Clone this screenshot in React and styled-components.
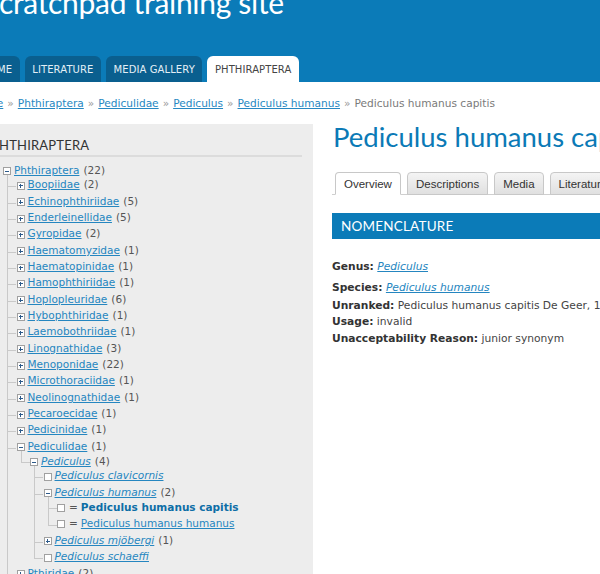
import styled, { createGlobalStyle } from "styled-components";

const GlobalStyle = createGlobalStyle`
  html, body {
    margin: 0;
    padding: 0;
    background: #fff;
    overflow: hidden;
    height: 574px;
  }
  body {
    font-family: "DejaVu Sans", Verdana, sans-serif;
    font-size: 11px;
    color: #333;
  }
`;

const tree = [
  {
    name: "Phthiraptera",
    count: 22,
    open: true,
    children: [
      { name: "Boopiidae", count: 2 },
      { name: "Echinophthiriidae", count: 5 },
      { name: "Enderleinellidae", count: 5 },
      { name: "Gyropidae", count: 2 },
      { name: "Haematomyzidae", count: 1 },
      { name: "Haematopinidae", count: 1 },
      { name: "Hamophthiriidae", count: 1 },
      { name: "Hoplopleuridae", count: 6 },
      { name: "Hybophthiridae", count: 1 },
      { name: "Laemobothriidae", count: 1 },
      { name: "Linognathidae", count: 3 },
      { name: "Menoponidae", count: 22 },
      { name: "Microthoraciidae", count: 1 },
      { name: "Neolinognathidae", count: 1 },
      { name: "Pecaroecidae", count: 1 },
      { name: "Pedicinidae", count: 1 },
      {
        name: "Pediculidae",
        count: 1,
        open: true,
        children: [
          {
            name: "Pediculus",
            italic: true,
            count: 4,
            open: true,
            children: [
              { name: "Pediculus clavicornis", italic: true, leaf: true },
              {
                name: "Pediculus humanus",
                italic: true,
                count: 2,
                open: true,
                children: [
                  { name: "Pediculus humanus capitis", synonym: true, current: true, leaf: true },
                  { name: "Pediculus humanus humanus", synonym: true, leaf: true },
                ],
              },
              { name: "Pediculus mjöbergi", italic: true, count: 1 },
              { name: "Pediculus schaeffi", italic: true, leaf: true },
            ],
          },
        ],
      },
      { name: "Pthiridae", count: 2 },
      { name: "Ricinidae", count: 3 },
    ],
  },
];

const App = () => {
  return (
    <>
      <GlobalStyle />
      <Page>
        <Header>
          <SiteName>Scratchpad training site</SiteName>
          <Nav>
            <NavTab>Home</NavTab>
            <NavTab>Literature</NavTab>
            <NavTab>Media gallery</NavTab>
            <NavTab $active>Phthiraptera</NavTab>
          </Nav>
        </Header>

        <Breadcrumb>
          <Crumb href="#">Home</Crumb>
          <Sep>»</Sep>
          <Crumb href="#">Phthiraptera</Crumb>
          <Sep>»</Sep>
          <Crumb href="#">Pediculidae</Crumb>
          <Sep>»</Sep>
          <Crumb href="#">Pediculus</Crumb>
          <Sep>»</Sep>
          <Crumb href="#">Pediculus humanus</Crumb>
          <Sep>»</Sep>
          <Here>Pediculus humanus capitis</Here>
        </Breadcrumb>

        <Body>
          <Sidebar>
            <BlockTitle>Phthiraptera</BlockTitle>
            <TreeList $root>
              {tree.map((n) => (
                <TreeNode key={n.name} node={n} depth={0} />
              ))}
            </TreeList>
          </Sidebar>

          <Main>
            <Title>Pediculus humanus capitis</Title>
            <Tabs>
              <Tab $active>Overview</Tab>
              <Tab>Descriptions</Tab>
              <Tab>Media</Tab>
              <Tab>Literature</Tab>
              <Tab>Maps</Tab>
            </Tabs>
            <SectionBar>Nomenclature</SectionBar>
            <Fields>
              <Field $gap={4.5}>
                <Label>Genus:</Label> <FieldLink href="#">Pediculus</FieldLink>
              </Field>
              <Field $gap={1.5}>
                <Label>Species:</Label> <FieldLink href="#">Pediculus humanus</FieldLink>
              </Field>
              <Field>
                <Label>Unranked:</Label> Pediculus humanus capitis De Geer, 1778
              </Field>
              <Field>
                <Label>Usage:</Label> invalid
              </Field>
              <Field>
                <Label>Unacceptability Reason:</Label> junior synonym
              </Field>
            </Fields>
          </Main>
        </Body>
      </Page>
    </>
  );
};

const TreeNode = ({ node, depth }) => {
  const kind = node.leaf ? "leaf" : node.open ? "open" : "closed";
  return (
    <Item $child={depth > 0}>
      <Row>
        <Toggle $kind={kind} />
        {node.synonym && <Eq>=</Eq>}
        {node.current ? (
          <Current>{node.name}</Current>
        ) : (
          <TreeLink href="#" $italic={node.italic}>
            {node.name}
          </TreeLink>
        )}
        {node.count !== undefined && <Count>({node.count})</Count>}
      </Row>
      {node.open && node.children && (
        <TreeList>
          {node.children.map((c) => (
            <TreeNode key={c.name} node={c} depth={depth + 1} />
          ))}
        </TreeList>
      )}
    </Item>
  );
};

const Page = styled.div`
  width: 700px;
  margin-left: -40px;
`;

const Header = styled.header`
  height: 82px;
  background: #0b7bb8;
  display: flex;
  flex-direction: column;
  justify-content: space-between;
  overflow: hidden;
`;

const SiteName = styled.h1`
  margin: -13px 0 0;
  padding-left: 23px;
  font-family: Lato, "Open Sans", sans-serif;
  font-weight: 400;
  font-size: 30px;
  line-height: 30px;
  color: #fff;
  letter-spacing: -0.3px;
`;

const Nav = styled.nav`
  display: flex;
  gap: 5px;
  padding-left: 14px;
`;

const NavTab = styled.a`
  height: 26px;
  line-height: 28px;
  padding: 0 7.5px;
  border-radius: 6px 6px 0 0;
  font-size: 10px;
  letter-spacing: 0.1px;
  text-transform: uppercase;
  background: ${(p) => (p.$active ? "#fff" : "#0a5f8f")};
  color: ${(p) => (p.$active ? "#444" : "#e4eff6")};
`;

const Breadcrumb = styled.div`
  padding: 13px 0 0 12px;
  height: 29px;
  box-sizing: border-box;
  line-height: 16px;
  font-size: 10.6px;
  white-space: nowrap;
  color: #777;
  margin-bottom: 13px;
`;

const Crumb = styled.a`
  color: #2788c2;
  text-decoration: underline;
`;

const Sep = styled.span`
  color: #9a9a9a;
  margin: 0 4px;
`;

const Here = styled.span`
  color: #7a7a7a;
`;

const Body = styled.div`
  display: flex;
  gap: 19px;
  align-items: flex-start;
`;

const Sidebar = styled.aside`
  flex: none;
  margin-left: 10px;
  width: 343px;
  height: 460px;
  box-sizing: border-box;
  padding: 13px 11px 0 21px;
  background: #ededed;
  overflow: hidden;
`;

const BlockTitle = styled.h2`
  margin: 0;
  font-family: Lato, "Open Sans", sans-serif;
  font-weight: 400;
  font-size: 13px;
  line-height: 16px;
  text-transform: uppercase;
  color: #333;
  letter-spacing: 0.2px;
  padding-bottom: 2px;
  border-bottom: 2px solid #dcdcdc;
`;

const TreeList = styled.ul`
  list-style: none;
  margin: ${(p) => (p.$root ? "4.5px 0 0" : "-1.5px 0 0.5px")};
  padding: 0 0 0 ${(p) => (p.$root ? "12px" : "13.5px")};
  font-size: 10.5px;
`;

const Item = styled.li`
  position: relative;

  ${(p) =>
    p.$child &&
    `
    &::before {
      content: "";
      position: absolute;
      left: -9.5px;
      top: -4px;
      bottom: 0;
      border-left: 1px solid #c9c9c9;
    }
    &:last-child::before {
      bottom: auto;
      height: 14px;
    }
    &::after {
      content: "";
      position: absolute;
      left: -9.5px;
      top: 10px;
      width: 9px;
      border-top: 1px solid #c9c9c9;
    }
  `}
`;

const Row = styled.div`
  display: flex;
  align-items: center;
  height: 16.33px;
  white-space: nowrap;
`;

const Toggle = styled.span`
  position: relative;
  z-index: 1;
  flex: none;
  width: 8px;
  height: 8px;
  margin: 3px 3px 0 0;
  box-sizing: border-box;
  border: 1px solid #a0a0a0;
  background: #fff;

  &::before {
    content: "";
    display: ${(p) => (p.$kind === "leaf" ? "none" : "block")};
    position: absolute;
    left: 1px;
    top: 2.5px;
    width: 4px;
    height: 1px;
    background: #2d5a8a;
  }
  &::after {
    content: "";
    display: ${(p) => (p.$kind === "closed" ? "block" : "none")};
    position: absolute;
    left: 2.5px;
    top: 1px;
    width: 1px;
    height: 4px;
    background: #2d5a8a;
  }
`;

const Eq = styled.span`
  color: #555;
  margin: 0 3px 0 1px;
`;

const TreeLink = styled.a`
  color: #2586c0;
  text-decoration: underline;
  font-style: ${(p) => (p.$italic ? "italic" : "normal")};
`;

const Current = styled.span`
  color: #0d6ea6;
  font-weight: bold;
  font-size: 10.5px;
`;

const Count = styled.span`
  color: #555;
  margin-left: 4px;
`;

const Main = styled.main`
  width: 400px;
  flex: none;
`;

const Title = styled.h1`
  margin: -1px 0 0;
  padding-left: 1px;
  font-family: Lato, "Open Sans", sans-serif;
  font-weight: 400;
  font-size: 27.5px;
  line-height: 28px;
  color: #0b7ab6;
  white-space: nowrap;
`;

const Tabs = styled.div`
  display: flex;
  gap: 6px;
  margin-top: 21px;
  padding-left: 3px;
  border-bottom: 1px solid #cfcfcf;
`;

const Tab = styled.a`
  height: 23px;
  margin-bottom: -1px;
  box-sizing: border-box;
  padding: 0 8px;
  line-height: 22px;
  font-family: "Liberation Sans", Arial, sans-serif;
  font-size: 11.5px;
  color: #333;
  border: 1px solid #c8c8c8;
  border-bottom-color: ${(p) => (p.$active ? "#fff" : "#c8c8c8")};
  border-radius: 4px 4px 0 0;
  background: ${(p) => (p.$active ? "#fff" : "linear-gradient(#f4f4f4, #e0e0e0)")};
`;

const SectionBar = styled.div`
  margin-top: 18px;
  height: 26px;
  line-height: 26px;
  padding-left: 9px;
  background: #0b7bb8;
  color: #fff;
  font-family: Lato, "Open Sans", sans-serif;
  font-size: 13.5px;
  text-transform: uppercase;
  letter-spacing: 0.2px;
`;

const Fields = styled.div`
  margin-top: 19.5px;
`;

const Field = styled.div`
  line-height: 16.5px;
  font-size: 10.7px;
  color: #444;
  white-space: nowrap;
  margin-bottom: ${(p) => p.$gap || 0}px;
`;

const Label = styled.strong`
  color: #333;
`;

const FieldLink = styled.a`
  color: #2586c0;
  font-style: italic;
  text-decoration: underline;
`;

export default App;
